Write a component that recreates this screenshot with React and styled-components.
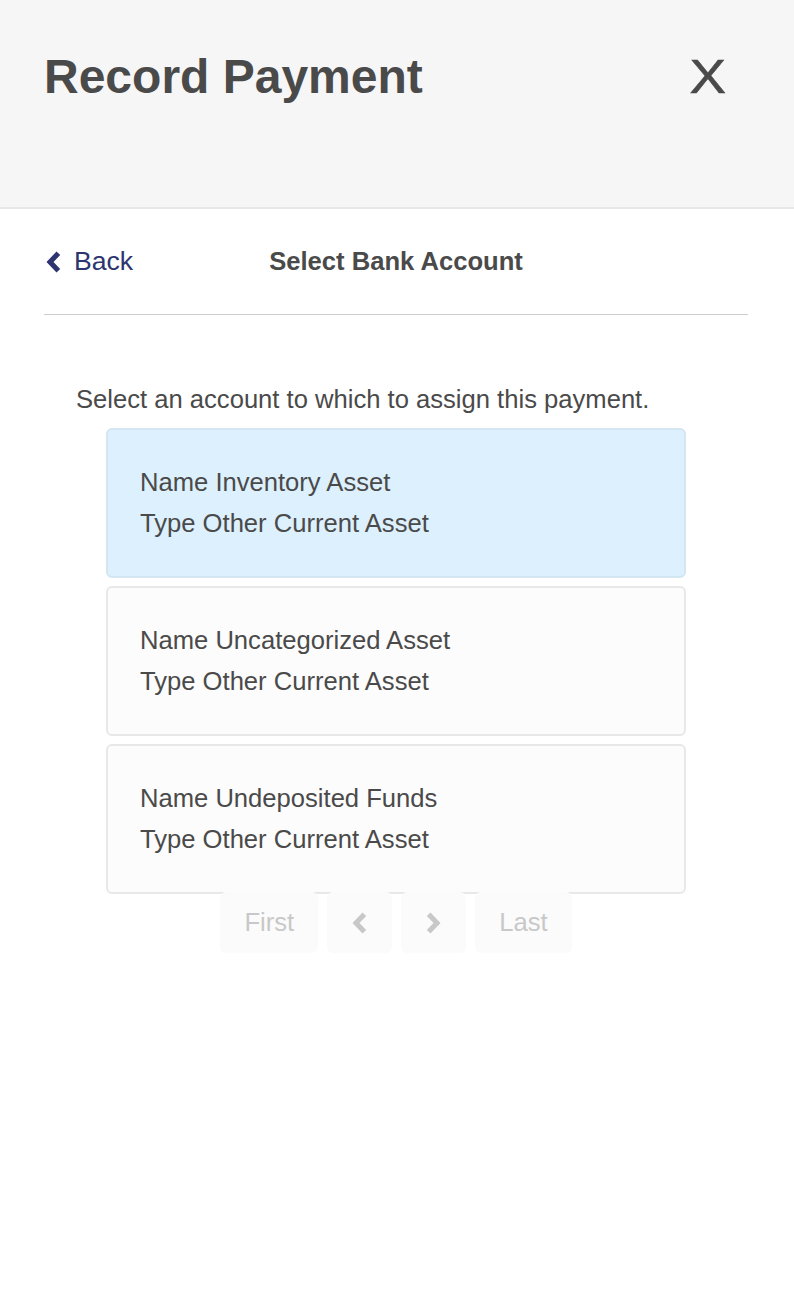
import React from 'react';
import styled, { createGlobalStyle } from 'styled-components';

const GlobalStyle = createGlobalStyle`
  html, body {
    margin: 0;
    padding: 0;
    background: #fff;
  }
  body {
    font-family: 'Liberation Sans', Arial, sans-serif;
    color: #4a4a4a;
  }
  * {
    box-sizing: border-box;
  }
`;

const Page = styled.div`
  min-height: 1294px;
  background: #fff;
`;

const Header = styled.header`
  height: 209px;
  background: #f6f6f6;
  border-bottom: 2px solid #e8e8e8;
  display: flex;
  justify-content: space-between;
  align-items: flex-start;
  padding: 53px 68px 0 44px;
`;

const Title = styled.h1`
  margin: 0;
  font-size: 48px;
  line-height: 48px;
  font-weight: 700;
  color: #4a4a4a;
`;

const CloseButton = styled.button`
  border: none;
  background: none;
  padding: 0;
  font-family: 'Liberation Sans', Arial, sans-serif;
  font-size: 48px;
  line-height: 48px;
  font-weight: 400;
  color: #4a4a4a;
  transform: scaleX(1.14);
  transform-origin: right center;
  -webkit-text-stroke: 0.6px #4a4a4a;
  cursor: pointer;
`;

const Body = styled.main`
  padding: 0 46px 0 44px;
`;

const NavRow = styled.div`
  position: relative;
  display: flex;
  align-items: center;
  justify-content: center;
  padding: 32px 0 32px;
  border-bottom: 1px solid #cccccc;
  font-size: 25.6px;
  line-height: 41px;
`;

const BackLink = styled.a`
  position: absolute;
  left: 0;
  top: 32px;
  display: flex;
  align-items: center;
  gap: 13px;
  font-size: 26.6px;
  color: #2e3470;
  text-decoration: none;
  cursor: pointer;

  svg {
    margin-left: 2px;
  }
`;

const StepTitle = styled.h2`
  margin: 0;
  font-size: 25.6px;
  line-height: 41px;
  font-weight: 700;
  color: #4a4a4a;
`;

const Content = styled.section`
  padding: 64px 32px 0 32px;
`;

const Intro = styled.p`
  margin: 0 0 8px;
  font-size: 25.6px;
  line-height: 41px;
`;

const AccountList = styled.ul`
  list-style: none;
  margin: 0 auto;
  padding: 0;
  width: 580px;
  display: flex;
  flex-direction: column;
  gap: 8px;
`;

const AccountCard = styled.li`
  padding: 32px;
  border-radius: 6px;
  border: 2px solid ${p => (p.$selected ? '#d3e6f2' : '#e8e8e8')};
  background: ${p => (p.$selected ? '#ddf0fd' : '#fcfcfc')};
  font-size: 25.6px;
  line-height: 41px;
  cursor: pointer;
`;

const Line = styled.div`
  white-space: nowrap;
`;

const Pager = styled.nav`
  display: flex;
  justify-content: center;
  gap: 9px;
  margin-top: -2px;
`;

const PageButton = styled.button`
  display: flex;
  align-items: center;
  justify-content: center;
  height: 61px;
  padding: 0 ${p => (p.$icon ? '25px' : '24px')};
  border: none;
  border-radius: 6px;
  background: #fbfbfb;
  color: #c8c8c8;
  font-family: 'Liberation Sans', Arial, sans-serif;
  font-size: 25.6px;
  line-height: 41px;
`;

const Chevron = ({ dir = 'left' }) => (
  <svg
    width="15"
    height="24"
    viewBox="0 0 14 24"
    aria-hidden="true"
    style={dir === 'right' ? { transform: 'scaleX(-1)' } : undefined}
  >
    <polygon points="0,12 10,1.5 13.7,5 7,12 13.7,19 10,22.5" fill="currentColor" />
  </svg>
);

const accounts = [
  { name: 'Inventory Asset', type: 'Other Current Asset', selected: true },
  { name: 'Uncategorized Asset', type: 'Other Current Asset' },
  { name: 'Undeposited Funds', type: 'Other Current Asset' },
];

export default function App() {
  return (
    <Page>
      <GlobalStyle />
      <Header>
        <Title>Record Payment</Title>
        <CloseButton aria-label="Close">X</CloseButton>
      </Header>
      <Body>
        <NavRow>
          <BackLink>
            <Chevron dir="left" />
            Back
          </BackLink>
          <StepTitle>Select Bank Account</StepTitle>
        </NavRow>
        <Content>
          <Intro>Select an account to which to assign this payment.</Intro>
          <AccountList>
            {accounts.map(a => (
              <AccountCard key={a.name} $selected={a.selected}>
                <Line>Name {a.name}</Line>
                <Line>Type {a.type}</Line>
              </AccountCard>
            ))}
          </AccountList>
          <Pager>
            <PageButton disabled>First</PageButton>
            <PageButton disabled $icon>
              <Chevron dir="left" />
            </PageButton>
            <PageButton disabled $icon>
              <Chevron dir="right" />
            </PageButton>
            <PageButton disabled>Last</PageButton>
          </Pager>
        </Content>
      </Body>
    </Page>
  );
}
